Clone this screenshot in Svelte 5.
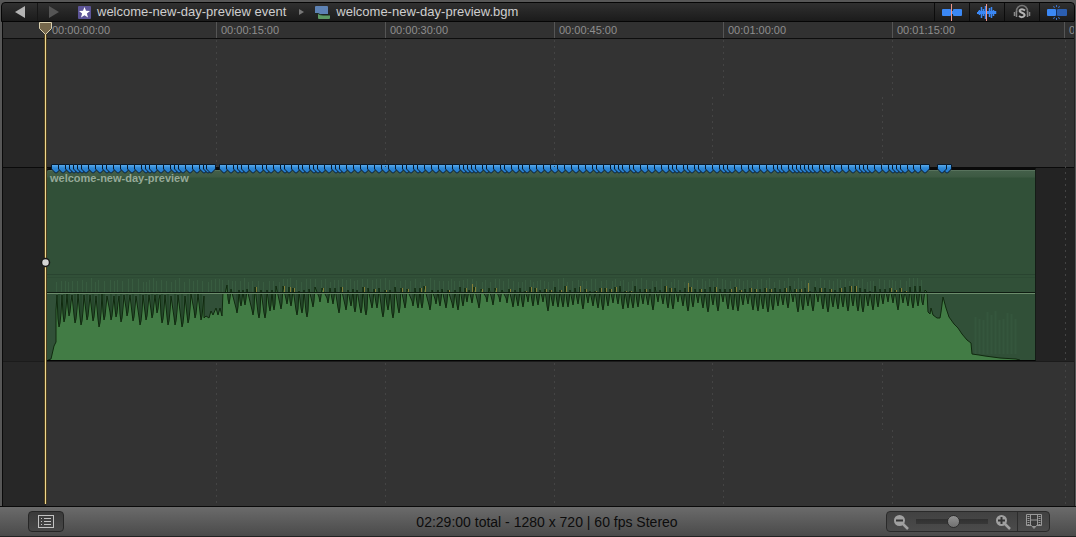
<script>
  const ticks = ['00:00:00:00', '00:00:15:00', '00:00:30:00', '00:00:45:00', '00:01:00:00', '00:01:15:00', '00:01:30:00'];

  let seed = 11;
  function rand() {
    seed = (seed * 16807) % 2147483647;
    return seed / 2147483647;
  }

  // Low points of the waveform outline, [x, y] in timeline pixels.
  const quiet = [[59, 327], [64, 322], [69, 316], [75, 323], [81, 325], [87, 320], [93, 321], [99, 327], [104, 320], [111, 320], [116, 317], [121, 322], [127, 316], [133, 321], [140, 325], [146, 320], [152, 318], [157, 313], [162, 323], [168, 325], [175, 325], [182, 327], [188, 323], [195, 318], [201, 320]];
  const loud = [[229, 304], [237, 313], [241, 306], [245, 305], [253, 315], [259, 318], [265, 318], [270, 311], [274, 310], [281, 309], [287, 304], [291, 306], [297, 315], [302, 313], [307, 317], [313, 307], [320, 302], [328, 303], [333, 304], [339, 313], [346, 310], [351, 306], [355, 312], [361, 313], [366, 315], [372, 308], [377, 308], [383, 317], [388, 310], [393, 318], [399, 313], [405, 308], [413, 306], [418, 308], [422, 308], [430, 310], [436, 304], [440, 306], [446, 308], [453, 308], [458, 310], [463, 306], [467, 302], [472, 303], [479, 308], [487, 302], [493, 305], [500, 302], [507, 303], [513, 307], [518, 306], [523, 307]];
  for (let x = 528; x < 922; x += 5) {
    loud.push([x, Math.round(302 + rand() * 10)]);
  }

  let line = 'M48 360 L51 359 L54 346 L56 342 L56 310 L57 295';
  for (const [x, y] of quiet) {
    const top = 294 + Math.round(rand() * 2);
    line += ` L${x - 1} ${y - 8} L${x} ${y} L${x + 1} ${y - 4} L${x + 2} ${y - 14} L${x + 3} ${top}`;
  }
  line += ' L204 318 L206 316 L209 318 L211 311 L213 315 L216 308 L218 315 L220 308 L222 316 L223 292 L225 294 L227 285';
  const hot = [];
  for (const [x, y] of loud) {
    const top = 286 + Math.round(rand() * 5);
    line += ` L${x - 1} ${y - 5} L${x} ${y} L${x + 1} ${y - 6} L${x + 2} ${top}`;
    if (rand() > 0.55) hot.push([x + 3, top]);
  }
  hot.push([472, 284], [580, 286], [688, 283], [808, 283]);
  line += ' L922 302 L923 305 L925 290 L927 292 L928 312 L930 314 L931 308 L933 315 L937 318 L940 318 L941 312 L943 297 L946 308 L949 317 L954 324 L958 328 L962 334 L967 340 L971 343 L972 354 L979 355 L985 356 L1000 358 L1016 359 L1020 360';

  // Dark gaps beside each low point.
  let gaps = '';
  for (const [x, y] of [...quiet, ...loud]) {
    gaps += `M${x} 294V${y - 3}`;
  }

  // Faint columns left by the unscaled audio.
  let ghost = '';
  for (let x = 56; x < 925; x += 3 + Math.round(rand() * 3)) {
    ghost += `M${x}.5 ${278 + Math.round(rand() * 4)}V292`;
  }
  let tail = '';
  for (let x = 975; x < 1018; x += 4) {
    tail += `M${x}.5 ${310 + Math.round(rand() * 12)}V354`;
  }

  const markers = [];
  for (let x = 52; x < 205; x += rand() > 0.4 ? 7 : 4) markers.push(x);
  markers.push(207);
  for (let x = 220; x < 914; x += rand() > 0.4 ? 7 : 4) markers.push(x);
  markers.push(914, 921, 943, 938);

  let zoomLevel = $state(52);
</script>

<div class="window">
  <header>
    <nav>
      <button class="step" aria-label="Back">
        <svg width="10" height="12" viewBox="0 0 10 12"><path d="M0 6 10 0v12z" fill="#b4b4b4" /></svg>
      </button>
      <button class="step" aria-label="Forward">
        <svg width="10" height="12" viewBox="0 0 10 12"><path d="M10 6 0 0v12z" fill="#555" /></svg>
      </button>
      <a href="#event">
        <svg width="13" height="13" viewBox="0 0 13 13"><rect width="13" height="13" rx="1" fill="#5c5497" /><path d="M6.500 1l1.500 3.800 4 .2-3.100 2.500 1.100 4-3.500-2.300L3 11.500l1.100-4L1 5l4-.2z" fill="#fff" /></svg>
        welcome-new-day-preview event
      </a>
      <svg class="crumb" width="5" height="6" viewBox="0 0 5 6"><path d="M0 0l5 3-5 3z" fill="#777" /></svg>
      <a href="#project">
        <svg width="15" height="13" viewBox="0 0 15 13"><path d="M1 0h11q1 0 1 1v7H5L3 8H0V1q0-1 1-1z" fill="#5d82b4" /><path d="M3 8h2q1 1 3 1h7v3q0 1-1 1H4q-1 0-1-1z" fill="#5d9a63" /><path d="M0 7.500h3q2 1.500 5 1.500h7" fill="none" stroke="#18261e" /></svg>
        welcome-new-day-preview.bgm
      </a>
    </nav>
    <div class="tools">
      <button aria-label="Skimming">
        <svg width="20" height="17" viewBox="0 0 20 17"><rect y="5" width="9" height="7" rx="1" fill="#3b88f5" /><rect x="11" y="5" width="9" height="7" rx="1" fill="#3b88f5" /><path d="M9 8.500h2" stroke="#3b88f5" stroke-width="3" /><path d="M9.500 0v17" stroke="#f0968c" /></svg>
      </button>
      <button aria-label="Audio skimming">
        <svg width="20" height="17" viewBox="0 0 20 17"><path d="M.5 8v2M2.500 6v5M4.500 3v11M6.500 5v7M8.500 2v13M12.500 4v9M14.500 3v11M16.500 6v6M18.500 7v3" stroke="#3b88f5" stroke-width="1.500" /><path d="M1 8.500h18" stroke="#3b88f5" stroke-width="3" /><path d="M9.500 0v17" stroke="#f0968c" /></svg>
      </button>
      <button aria-label="Solo">
        <svg width="18" height="17" viewBox="0 0 18 17"><path d="M3.500 8V7a5.500 5.500 0 0 1 11 0v1" fill="none" stroke="#777" stroke-width="1.500" /><path d="M1.500 8v4M3.500 7v6M14.500 7v6M16.500 8v4" stroke="#888" stroke-width="1.500" /><path d="M12 6.500Q9 4 6.800 6.200C5.500 9 12.200 8.500 11.600 11.500Q9.500 14.500 6 12" fill="none" stroke="#b4b4b4" stroke-width="2" /></svg>
      </button>
      <button aria-label="Snapping">
        <svg width="20" height="17" viewBox="0 0 20 17"><rect y="5" width="9" height="7" rx="1" fill="#3b88f5" /><rect x="10" y="5" width="10" height="7" rx="1" fill="#2b5eb0" /><path d="M9.500 5v7" stroke="#123163" /><path d="M9.500 1v2M9.500 14v2M6.500 2l1 2M12.500 2l-1 2M6.500 15l1-2M12.500 15l-1-2" stroke="#3b70c5" /></svg>
      </button>
    </div>
  </header>

  <main>
    <div class="ruler">
      {#each ticks as t}<span>{t}</span>{/each}
    </div>
    <div class="lanes">
      <div class="lane above"></div>
      <div class="lane primary">
        <div class="clip">
          <div class="name">welcome-new-day-preview</div>
          <svg class="wave" width="988" height="86" viewBox="47 274 988 86" aria-label="Audio waveform">
            <path d="M47 274.500H1035" stroke="#294430" />
            <path d="M47 277.500H1035" stroke="#2d4b34" />
            <path d={ghost} stroke="#385c40" />
            <path d={tail} stroke="#35563d" stroke-width="2" />
            <path d="{line} V361 H48Z" fill="#427c45" />
            <path d={gaps} stroke="#26482c" stroke-width="2" />
            <path d={line} fill="none" stroke="#10290f" stroke-width="1" />
            {#each hot as [x, y]}
              <path d="M{x}.5 {y}V292" stroke="#85803a" />
            {/each}
            <path d="M47 292.500H1035" stroke="#0e1c11" />
            <path d="M47 293.500H1035" stroke="#6c8c6c" />
          </svg>
        </div>
        <svg class="markers" width="910" height="11" viewBox="47 163 910 11" aria-label="Markers">
          <defs>
            <linearGradient id="pin" x1="0" y1="0" x2="0" y2="1">
              <stop offset="0" stop-color="#62b0ee" />
              <stop offset=".4" stop-color="#2f88d6" />
              <stop offset="1" stop-color="#2277c6" />
            </linearGradient>
          </defs>
          {#each markers as x}
            <path d="M{x - 0.5} 164.500h9v4.500l-4 4h-1l-4-4z" fill="url(#pin)" stroke="#08192b" />
          {/each}
        </svg>
      </div>
      <div class="lane below"></div>
      <svg class="grid" width="1072" height="466" viewBox="3 39 1072 466" aria-hidden="true">
        <path d="M216.500 40V167M216.500 363V505M385.500 40V167M385.500 363V505M554.500 40V167M554.500 363V505M723.500 40V97M712.500 97V167M712.500 363V430M723.500 430V505M892.500 40V97M882.500 97V167M882.500 363V430M892.500 430V505M1065.500 40V505" stroke="#444" stroke-dasharray="2 4" />
      </svg>
    </div>
    <div class="playhead">
      <svg width="15" height="482" viewBox="0 0 15 482">
        <path d="M7.500 10V482" stroke="#4a3d20" stroke-width="3" />
        <path d="M7.500 10V482" stroke="#f0d88c" />
        <path d="M1.500 .5h12v6l-6 6-6-6z" fill="#75674b" stroke="#d9cfae" />
        <circle cx="7.500" cy="240.500" r="4" fill="#d4d4d4" stroke="#171717" stroke-width="1.500" />
      </svg>
    </div>
  </main>

  <footer>
    <button class="index" aria-label="Timeline index">
      <svg width="16" height="13" viewBox="0 0 16 13"><rect x=".5" y=".5" width="15" height="12" fill="none" stroke="#c2c2c2" /><path d="M3 3.500h1M6 3.500h7M3 6.500h1M6 6.500h7M3 9.500h1M6 9.500h7" stroke="#c2c2c2" /></svg>
    </button>
    <p>02:29:00 total - 1280 x 720 | 60 fps Stereo</p>
    <div class="zoom">
      <button aria-label="Zoom out">
        <svg width="16" height="16" viewBox="0 0 16 16"><circle cx="6.500" cy="6.500" r="5.500" fill="#a0a0a0" /><path d="M10 10l5 5" stroke="#a0a0a0" stroke-width="2.500" /><path d="M3 6.500h7" stroke="#333" stroke-width="2" /></svg>
      </button>
      <input type="range" min="0" max="100" bind:value={zoomLevel} aria-label="Zoom level" />
      <button aria-label="Zoom in">
        <svg width="16" height="16" viewBox="0 0 16 16"><circle cx="6.500" cy="6.500" r="5.500" fill="#a0a0a0" /><path d="M10 10l5 5" stroke="#a0a0a0" stroke-width="2.500" /><path d="M3 6.500h7M6.500 3v7" stroke="#333" stroke-width="2" /></svg>
      </button>
      <button class="look" aria-label="Clip appearance">
        <svg width="16" height="15" viewBox="0 0 16 15"><path d="M.5 .5h15v11h-5l-2.500 3-2.500-3h-5z" fill="#3a3a3a" stroke="#999" /><path d="M4.500 1v10M11.500 1v10M4.500 6h7" stroke="#999" /><path d="M2.500 2v9M13.500 2v9" stroke="#999" stroke-width="2" stroke-dasharray="1 1" /><path d="M6 12h4l-2 2z" fill="#999" /></svg>
      </button>
    </div>
  </footer>
</div>

<style>
  :global(body) {
    margin: 0;
    background: #5a5a5a;
  }
  .window {
    box-sizing: border-box;
    min-height: 100vh;
    display: flex;
    flex-direction: column;
    overflow: hidden;
    padding-top: 2px;
    background: #575757;
    font-family: "Liberation Sans", Arial, sans-serif;
  }
  button {
    display: flex;
    align-items: center;
    justify-content: center;
    padding: 0;
    border: 0;
    background: none;
  }
  header {
    display: flex;
    justify-content: space-between;
    height: 18px;
    margin: 0 1px;
    border: 1px solid #050505;
    border-radius: 4px 4px 0 0;
    background: linear-gradient(#303030, #1b1b1b);
  }
  nav {
    display: flex;
    align-items: center;
  }
  .step {
    width: 35px;
    height: 18px;
  }
  .step + .step {
    width: 32px;
    border-left: 1px solid #161616;
  }
  a {
    display: flex;
    align-items: center;
    gap: 6px;
    margin-left: 9px;
    color: #cecece;
    font-size: 13px;
    line-height: 20px;
    text-decoration: none;
    white-space: nowrap;
  }
  .crumb {
    margin-left: 13px;
  }
  .crumb + a {
    margin-left: 11px;
  }
  .tools {
    display: flex;
  }
  .tools button {
    width: 35px;
    border-left: 1px solid #0c0c0c;
  }
  main {
    position: relative;
    flex: 1;
    display: flex;
    flex-direction: column;
    margin: 0 1px 0 2px;
    border-left: 1px solid #0a0a0a;
    border-right: 1px solid #222;
  }
  .ruler {
    display: flex;
    height: 16px;
    padding-left: 44px;
    overflow: hidden;
    background: #313131;
    border-bottom: 1px solid #0d0d0d;
  }
  .ruler span {
    box-sizing: border-box;
    flex: 0 0 169px;
    padding-left: 4px;
    border-left: 1px solid #555;
    color: #8e8e8e;
    font-size: 11px;
    line-height: 16px;
  }
  .ruler span:first-child {
    border-color: transparent;
  }
  .ruler span:nth-child(6) {
    flex-basis: 172px;
  }
  .lanes {
    position: relative;
    flex: 1;
    display: flex;
    flex-direction: column;
    overflow: hidden;
  }
  .lane {
    background: linear-gradient(90deg, #272727 43px, #333 43px);
  }
  .above {
    flex: 127;
  }
  .below {
    flex: 143;
  }
  .primary {
    position: relative;
    flex: 0 0 193px;
    border-top: 1px solid #0a0a0a;
    border-bottom: 1px solid #1b1b1b;
    background: #232323;
  }
  .clip {
    display: flex;
    flex-direction: column;
    justify-content: space-between;
    box-sizing: border-box;
    width: 989px;
    height: 193px;
    margin-left: 44px;
    border-top: 2px solid #0a0a0a;
    border-bottom: 1px solid #050505;
    border-right: 1px solid #141c16;
    border-radius: 3px 0 0 0;
    background: linear-gradient(#58735d 1px, #435f49 1px, #3c5942 7px, #315038 8px);
  }
  .name {
    padding-left: 3px;
    color: #96aa98;
    font-size: 11px;
    font-weight: bold;
    line-height: 16px;
  }
  .wave {
    display: block;
  }
  .markers {
    position: absolute;
    left: 44px;
    top: -5px;
  }
  .grid {
    position: absolute;
    left: 0;
    top: 0;
  }
  .playhead {
    position: absolute;
    left: 35px;
    top: 0;
    bottom: 0;
    overflow: hidden;
  }
  footer {
    display: grid;
    grid-template-columns: 1fr auto 1fr;
    align-items: center;
    height: 31px;
    padding: 0 26px 0 28px;
    border-top: 1px solid #0a0a0a;
    border-bottom: 1px solid #222;
    background: linear-gradient(#6b6b6b, #4a4a4a);
    box-sizing: border-box;
  }
  .index {
    width: 36px;
    height: 21px;
    border: 1px solid #262626;
    border-radius: 4px;
    background: linear-gradient(#3a3a3a, #474747);
  }
  p {
    margin: 0;
    padding-left: 16px;
    color: #0c0c0c;
    font-size: 14px;
    line-height: 20px;
  }
  .zoom {
    justify-self: end;
    display: flex;
    align-items: center;
    height: 19px;
    padding-left: 6px;
    border: 1px solid #2a2a2a;
    border-radius: 4px;
    background: linear-gradient(#414141, #4b4b4b);
  }
  input {
    appearance: none;
    width: 72px;
    height: 14px;
    margin: 0 7px;
    background: linear-gradient(#0000 4px, #303030 4px, #383838 9px, #0000 9px);
    border-radius: 3px;
  }
  input::-webkit-slider-thumb {
    appearance: none;
    width: 13px;
    height: 13px;
    border: 1px solid #2e2e2e;
    border-radius: 50%;
    background: linear-gradient(#929292, #707070);
  }
  .look {
    width: 32px;
    height: 19px;
    margin-left: 6px;
    border-left: 1px solid #2d2d2d;
  }
</style>
